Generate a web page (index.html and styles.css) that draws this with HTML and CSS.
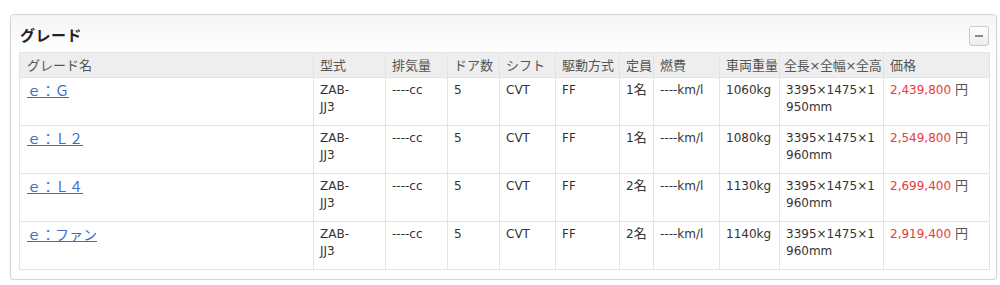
FILE: index.html
```html
<!DOCTYPE html>
<html lang="ja">
<head>
<meta charset="UTF-8">
<title>グレード</title>
<link rel="stylesheet" href="styles.css">
</head>
<body>
<div class="panel">
    <div class="panel-head">
        <h2>グレード</h2>
        <button class="toggle" type="button" aria-label="閉じる"><span></span></button>
    </div>
    <div class="panel-body">
        <table class="grade">
            <colgroup>
                <col style="width:294px"><col style="width:72px"><col style="width:62px"><col style="width:52px">
                <col style="width:56px"><col style="width:64px"><col style="width:34px"><col style="width:66px">
                <col style="width:60px"><col style="width:104px"><col style="width:106px">
            </colgroup>
            <thead>
                <tr>
                    <th>グレード名</th><th>型式</th><th>排気量</th><th>ドア数</th><th>シフト</th><th>駆動方式</th>
                    <th>定員</th><th>燃費</th><th>車両重量</th><th class="dim">全長×全幅×全高</th><th>価格</th>
                </tr>
            </thead>
            <tbody>
                <tr>
                    <td><a href="#">ｅ：Ｇ</a></td><td class="model">ZAB-JJ3</td><td>----cc</td><td>5</td><td>CVT</td><td>FF</td>
                    <td>1<span class="jp">名</span></td><td>----km/l</td><td>1060kg</td><td class="size">3395×1475×1950mm</td>
                    <td><span class="price">2,439,800</span> <span class="jp yen">円</span></td>
                </tr>
                <tr>
                    <td><a href="#">ｅ：Ｌ２</a></td><td class="model">ZAB-JJ3</td><td>----cc</td><td>5</td><td>CVT</td><td>FF</td>
                    <td>1<span class="jp">名</span></td><td>----km/l</td><td>1080kg</td><td class="size">3395×1475×1960mm</td>
                    <td><span class="price">2,549,800</span> <span class="jp yen">円</span></td>
                </tr>
                <tr>
                    <td><a href="#">ｅ：Ｌ４</a></td><td class="model">ZAB-JJ3</td><td>----cc</td><td>5</td><td>CVT</td><td>FF</td>
                    <td>2<span class="jp">名</span></td><td>----km/l</td><td>1130kg</td><td class="size">3395×1475×1960mm</td>
                    <td><span class="price">2,699,400</span> <span class="jp yen">円</span></td>
                </tr>
                <tr>
                    <td><a href="#">ｅ：ファン</a></td><td class="model">ZAB-JJ3</td><td>----cc</td><td>5</td><td>CVT</td><td>FF</td>
                    <td>2<span class="jp">名</span></td><td>----km/l</td><td>1140kg</td><td class="size">3395×1475×1960mm</td>
                    <td><span class="price">2,919,400</span> <span class="jp yen">円</span></td>
                </tr>
            </tbody>
        </table>
    </div>
</div>
</body>
</html>
```

FILE: styles.css
```css
* {
    margin: 0;
    padding: 0;
    box-sizing: border-box;
}

body {
    padding: 14px 3px 0 10px;
    background: #fff;
    color: #333;
    font-family: "DejaVu Sans", Verdana, "Noto Sans CJK JP", sans-serif;
    font-size: 12px;
}

.panel {
    width: 987px;
    border: 1px solid #d4d4d4;
    border-radius: 4px;
    box-shadow: 0 1px 2px rgba(0, 0, 0, 0.08);
    background: #fff;
}

.panel-head {
    display: flex;
    align-items: center;
    justify-content: space-between;
    padding: 6px 7px 5px 9px;
    height: 37px;
    border-radius: 4px 4px 0 0;
    background: linear-gradient(#f4f4f4, #fff);
}

.panel-head h2 {
    font-family: "DejaVu Sans", "Noto Sans CJK JP", sans-serif;
    font-size: 15px;
    font-weight: bold;
    color: #222;
    letter-spacing: 0.5px;
}

.toggle {
    display: flex;
    align-items: center;
    justify-content: center;
    width: 20px;
    height: 20px;
    margin-top: 4px;
    border: 1px solid #c8c8c8;
    border-radius: 3px;
    background: linear-gradient(#fff, #ececec);
}

.toggle span {
    display: block;
    width: 8px;
    height: 2px;
    background: #888;
}

.panel-body {
    padding: 0 7px 9px 8px;
}

.grade {
    width: 970px;
    table-layout: fixed;
    border-collapse: collapse;
}

.grade th,
.grade td {
    border: 1px solid #e4e4e4;
    padding: 4px 6px 9px 6px;
    line-height: 17px;
    text-align: left;
    vertical-align: top;
    font-weight: normal;
}

.grade th {
    padding: 4px 0 3px 6px;
    background: #eee;
    color: #555;
    white-space: nowrap;
    font-size: 13px;
}

.grade th.dim {
    padding-left: 4px;
    letter-spacing: -0.3px;
}

.grade td:first-child,
.grade th:first-child {
    padding-left: 7px;
}

.grade a {
    color: #3d6dcc;
    text-decoration: underline;
    font-family: "Noto Sans CJK JP", sans-serif;
    font-size: 14px;
}

.grade .model {
    padding-right: 26px;
}

.grade .size {
    word-break: break-all;
}

.jp {
    font-family: "Noto Sans CJK JP", sans-serif;
    font-size: 13px;
    line-height: 1;
}

.price {
    color: #e63b3b;
}

.yen {
    color: #555;
}
```
